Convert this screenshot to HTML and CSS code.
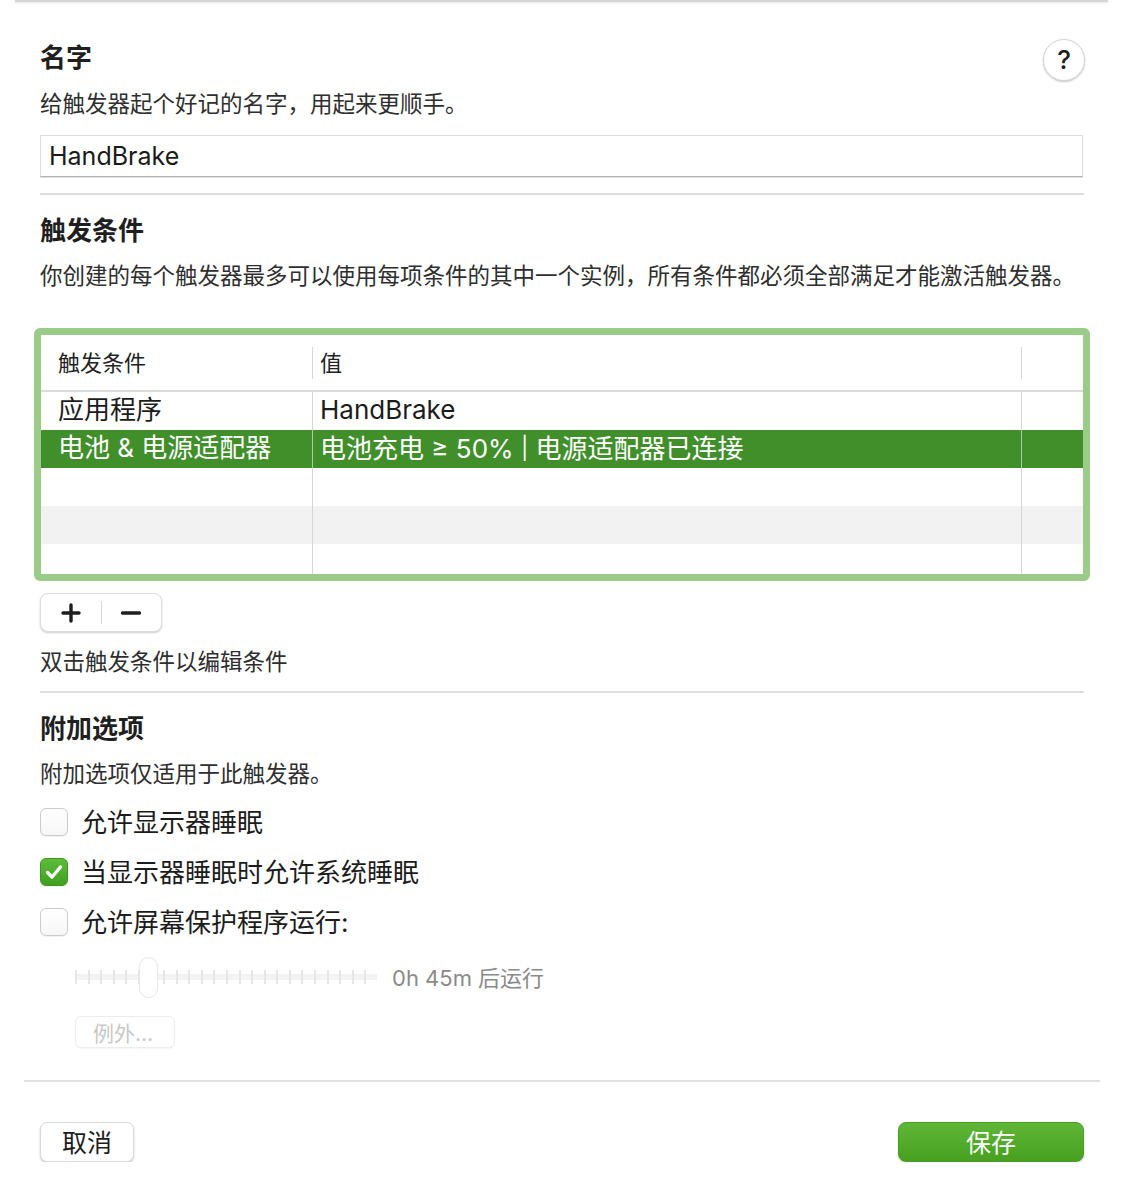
FILE: index.html
```html
<!DOCTYPE html>
<html lang="zh-CN">
  <head>
    <meta charset="utf-8" />
    <meta name="viewport" content="width=device-width,initial-scale=1.0" />
    <title>编辑触发器</title>
    <link rel="stylesheet" href="styles.css">
  </head>
  <body>
    <div class="top-edge"></div>
    <main class="content">
      <section>
        <div class="section-head">
          <h2>名字</h2>
          <button class="help" title="帮助">?</button>
        </div>
        <p class="desc">给触发器起个好记的名字，用起来更顺手。</p>
        <div class="textfield">HandBrake</div>
      </section>
      <hr class="divider" />

      <section>
        <h2 class="title">触发条件</h2>
        <p class="desc">你创建的每个触发器最多可以使用每项条件的其中一个实例，所有条件都必须全部满足才能激活触发器。</p>
        <div class="table">
          <div class="table-head">
            <div class="th">触发条件</div>
            <div class="th">值</div>
            <div class="th"></div>
          </div>
          <div class="tr">
            <div class="td">应用程序</div>
            <div class="td">HandBrake</div>
            <div class="td"></div>
          </div>
          <div class="tr selected">
            <div class="td">电池 &amp; 电源适配器</div>
            <div class="td">电池充电 ≥ 50% <span class="bar">|</span> 电源适配器已连接</div>
            <div class="td"></div>
          </div>
          <div class="tr">
            <div class="td"></div><div class="td"></div><div class="td"></div>
          </div>
          <div class="tr alt">
            <div class="td"></div><div class="td"></div><div class="td"></div>
          </div>
          <div class="tr">
            <div class="td"></div><div class="td"></div><div class="td"></div>
          </div>
        </div>
        <div class="segmented">
          <button title="添加条件">
            <svg width="22" height="22" viewBox="0 0 22 22"><path d="M11 3v16M3 11h16" stroke="#1e1e1e" stroke-width="3.4" stroke-linecap="round" fill="none"/></svg>
          </button>
          <span class="seg-sep"></span>
          <button title="删除条件">
            <svg width="22" height="22" viewBox="0 0 22 22"><path d="M2.5 11h17" stroke="#1e1e1e" stroke-width="3.4" stroke-linecap="round" fill="none"/></svg>
          </button>
        </div>
        <p class="desc hint">双击触发条件以编辑条件</p>
      </section>
      <hr class="divider" />

      <section>
        <h2 class="title">附加选项</h2>
        <p class="desc">附加选项仅适用于此触发器。</p>
        <ul class="options">
          <li><span class="check"></span>允许显示器睡眠</li>
          <li>
            <span class="check on">
              <svg width="28" height="28" viewBox="0 0 28 28"><path d="M7.5 14.5l4.5 4.5 8.5-10" stroke="#fff" stroke-width="3.4" stroke-linecap="round" stroke-linejoin="round" fill="none"/></svg>
            </span>当显示器睡眠时允许系统睡眠
          </li>
          <li><span class="check"></span>允许屏幕保护程序运行:</li>
        </ul>
        <div class="slider-row">
          <div class="slider"><span class="knob"></span></div>
          <span class="slider-label">0h 45m 后运行</span>
        </div>
        <button class="except" disabled>例外...</button>
      </section>
    </main>
    <hr class="footer-rule" />
    <footer class="footer">
      <button class="btn">取消</button>
      <button class="btn primary">保存</button>
    </footer>
  </body>
</html>
```

FILE: styles.css
```css
body {
  margin: 0;
  background: #fff;
  color: #222;
  font-family: "Inter", "Noto Sans CJK SC", sans-serif;
}

button {
  font-family: inherit;
}

.top-edge {
  height: 2px;
  margin: 0 16px 0 15px;
  background: #d6d6d6;
  box-shadow: 0 1px 2px rgba(0, 0, 0, 0.1);
}

.content {
  padding: 0 40px;
}

h2 {
  margin: 0;
  font-size: 26px;
  line-height: 32px;
  font-weight: 700;
  color: #1f1f1f;
}
.title {
  margin-top: 20px;
}

.section-head {
  margin-top: 37px;
  height: 42px;
  display: flex;
  align-items: center;
  justify-content: space-between;
}
.section-head h2 {
  margin-bottom: 4px;
}
.help {
  width: 42px;
  height: 42px;
  margin-right: -1px;
  border-radius: 50%;
  border: 1px solid #d6d6d6;
  background: #fff;
  box-shadow: 0 1px 2px rgba(0, 0, 0, 0.22);
  font-size: 26px;
  font-weight: 500;
  color: #1e1e1e;
  padding: 0;
  line-height: 40px;
}

.desc {
  margin: 8px 0 0;
  font-size: 22.5px;
  line-height: 30px;
  color: #2e2e2e;
}
.title + .desc {
  margin-top: 14px;
}

.textfield {
  margin-top: 16px;
  height: 42px;
  box-sizing: border-box;
  margin-right: 1px;
  padding: 0 8px 2px;
  border: 1px solid #dcdcdc;
  border-bottom-color: #b3b3b3;
  box-shadow: 0 1px 0 #e2e2e2;
  font-size: 25px;
  line-height: 40px;
  color: #1a1a1a;
}

.divider {
  margin: 14px 0 0;
  height: 2px;
  border: 0;
  background: #dedede;
}
section:first-child + .divider {
  margin-top: 16px;
}

/* conditions table */
.table {
  margin: 37px -6px 0;
  height: 253px;
  box-sizing: border-box;
  border: 7px solid #9bcb89;
  border-radius: 6px;
  overflow: hidden;
  background: #fff;
}
.table-head,
.tr {
  display: grid;
  grid-template-columns: 271px 709px 1fr;
}
.table-head {
  height: 55px;
  align-items: center;
  border-bottom: 2px solid #dcdcdc;
}
.th {
  height: 32px;
  font-size: 22px;
  line-height: 32px;
  padding-left: 17px;
  color: #222;
}
.th + .th,
.td + .td {
  border-left: 1px solid #d6d6d6;
  padding-left: 7px;
}
.tr {
  height: 38px;
}
.td {
  font-size: 26px;
  line-height: 36px;
  padding-left: 17px;
  white-space: nowrap;
  color: #1c1c1c;
}
.td .bar {
  font-size: 22px;
  vertical-align: 2px;
}
.tr.selected {
  background: #408f2a;
}
.tr.selected .td {
  color: #fff;
}
.tr.selected .td + .td {
  border-left-color: #a9cf9c;
}
.tr.alt {
  background: #f2f2f2;
}

.segmented {
  margin-top: 12px;
  width: 122px;
  height: 39px;
  box-sizing: border-box;
  display: flex;
  align-items: center;
  border: 1px solid #dedede;
  border-radius: 8px;
  background: #fff;
  box-shadow: 0 1px 2px rgba(0, 0, 0, 0.2);
}
.segmented button {
  flex: 1;
  height: 100%;
  border: 0;
  background: none;
  padding: 0;
  display: flex;
  align-items: center;
  justify-content: center;
}
.seg-sep {
  width: 1px;
  height: 23px;
  background: #d9d9d9;
}
.desc.hint {
  margin-top: 15px;
}

/* options */
.options {
  list-style: none;
  margin: 8px 0 0;
  padding: 0;
}
.options li {
  height: 50px;
  box-sizing: border-box;
  padding-bottom: 4px;
  display: flex;
  align-items: center;
  gap: 13px;
  font-size: 26px;
  color: #1c1c1c;
}
.check {
  width: 28px;
  height: 28px;
  margin-top: 4px;
  box-sizing: border-box;
  border: 1px solid #cbcbcb;
  border-radius: 6px;
  background: linear-gradient(#fff, #f7f7f7);
  box-shadow: 0 1px 1px rgba(0, 0, 0, 0.06);
}
.check.on {
  border-color: #3f9522;
  background: linear-gradient(#5dbd3b, #3f9f1f);
}
.check svg {
  display: block;
  margin: -1px;
}

.slider-row {
  margin-top: 8px;
  height: 44px;
  padding-left: 35px;
  display: flex;
  align-items: center;
  gap: 15px;
}
.slider {
  width: 302px;
  height: 44px;
  display: flex;
  align-items: center;
  background:
    repeating-linear-gradient(90deg, #e6e6e6 0 2px, transparent 2px 12.58px) center / 100% 14px no-repeat,
    linear-gradient(#f3f3f3, #f3f3f3) center / 100% 6px no-repeat;
}
.knob {
  margin-left: 64px;
  width: 19px;
  height: 41px;
  box-sizing: border-box;
  border: 1px solid #e8e8e8;
  border-radius: 10px;
  background: #fff;
}
.slider-label {
  font-size: 22px;
  color: #8a8a8a;
  padding-bottom: 3px;
}

.except {
  margin: 17px 0 0 35px;
  width: 100px;
  height: 32px;
  border: 1px solid #ededed;
  border-radius: 6px;
  background: #fff;
  box-shadow: 0 1px 1px rgba(0, 0, 0, 0.04);
  font-size: 21px;
  color: #c8c8c8;
  text-align: left;
  padding: 0 0 2px 17px;
}

/* footer */
.footer-rule {
  margin: 32px 24px 0;
  height: 2px;
  border: 0;
  background: #e0e0e0;
}
.footer {
  margin-top: 40px;
  padding: 0 40px;
  display: flex;
  justify-content: space-between;
}
.btn {
  width: 94px;
  height: 40px;
  border: 1px solid #dadada;
  border-radius: 7px;
  background: #fff;
  box-shadow: 0 1px 2px rgba(0, 0, 0, 0.22);
  font-size: 25px;
  color: #1c1c1c;
  padding: 0 0 4px;
}
.btn.primary {
  width: 186px;
  border-color: #479f24;
  border-radius: 8px;
  background: linear-gradient(#5fb637, #47a020);
  color: #fff;
}
```
